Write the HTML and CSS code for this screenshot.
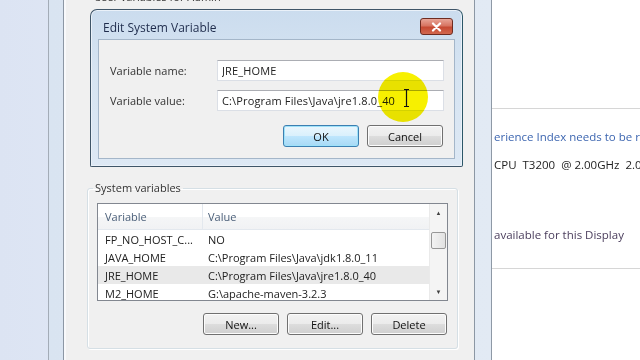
FILE: index.html
```html
<!DOCTYPE html>
<html lang="en">
<head>
<meta charset="UTF-8">
<title>Environment Variables - Edit System Variable</title>
<meta name="viewport" content="width=device-width, initial-scale=1.0">
<link rel="stylesheet" href="styles.css">
</head>
<body>

<div class="desk"></div>

<div class="env">
    <div class="env-body">
        <div class="user-title">User variables for Admin</div>

        <fieldset class="group">
            <legend>System variables</legend>
            <div class="list">
                <div class="list-main">
                    <div class="list-head">
                        <span class="col-var">Variable</span>
                        <span class="col-val">Value</span>
                    </div>
                    <div class="row"><span class="col-var">FP_NO_HOST_C...</span><span class="col-val">NO</span></div>
                    <div class="row"><span class="col-var">JAVA_HOME</span><span class="col-val">C:\Program Files\Java\jdk1.8.0_11</span></div>
                    <div class="row sel"><span class="col-var">JRE_HOME</span><span class="col-val">C:\Program Files\Java\jre1.8.0_40</span></div>
                    <div class="row"><span class="col-var">M2_HOME</span><span class="col-val">G:\apache-maven-3.2.3</span></div>
                </div>
                <div class="scroll">
                    <div class="arrow">&#9650;</div>
                    <div class="track"><div class="thumb"></div></div>
                    <div class="arrow">&#9660;</div>
                </div>
            </div>
            <div class="btn-row">
                <button class="btn">New...</button>
                <button class="btn">Edit...</button>
                <button class="btn">Delete</button>
            </div>
        </fieldset>
    </div>
</div>

<div class="props">
    <div class="props-top"></div>
    <div class="props-info">
        <p class="link">erience Index needs to be refreshed</p>
        <p>CPU&nbsp; T3200&nbsp; @ 2.00GHz&nbsp; 2.00 GHz</p>
        <p class="display">available for this Display</p>
    </div>
</div>

<!-- dialog on top of the Environment Variables window -->
<div class="dialog">
    <div class="title-bar">
        <span class="title">Edit System Variable</span>
        <div class="close">
            <svg width="13" height="10" viewBox="0 0 13 10">
                <path d="M3 1.5 L10 8.5 M10 1.5 L3 8.5" stroke="#fff" stroke-width="2.2" stroke-linecap="round"/>
            </svg>
        </div>
    </div>
    <div class="dlg-body">
        <div class="fields">
            <label for="varName">Variable name:</label>
            <input id="varName" type="text" value="JRE_HOME">
            <label for="varValue">Variable value:</label>
            <input id="varValue" type="text" value="C:\Program Files\Java\jre1.8.0_40">
        </div>
        <div class="dlg-buttons">
            <button class="btn default">OK</button>
            <button class="btn">Cancel</button>
        </div>
    </div>
</div>

<div class="spot"></div>
<svg class="ibeam" width="7" height="20" viewBox="0 0 7 20">
    <path d="M1 1.5 H6 M3.5 1.5 V18.5 M1 18.5 H6" stroke="#111" stroke-width="1.2" fill="none"/>
</svg>

</body>
</html>
```

FILE: styles.css
```css
body {
    margin: 0;
    width: 640px;
    height: 360px;
    overflow: hidden;
    display: flex;
    font-family: "Open Sans", "Noto Sans", sans-serif;
    font-size: 11px;
    color: #222;
    background: linear-gradient(90deg, #dce4f3 0%, #e9eff9 70%, #e3eaf6 100%);
}
.desk {
    width: 48px;
    flex: none;
}
.env {
    width: 444px;
    flex: none;
    display: flex;
    box-sizing: border-box;
    border-left: 1px solid #a3acb7;
    border-right: 1px solid #8e99a6;
    background: linear-gradient(90deg, #d9e4f1, #e2eaf4);
    padding: 0 16px 0 14px;
}
.env-body {
    flex: 1;
    background: #f0f0f0;
    border-left: 1px solid #8c97a4;
    border-right: 1px solid #8c97a4;
    box-shadow: inset 2px 0 0 #f8f9fb;
}
.user-title {
    margin: -11px 0 0 30px;
    line-height: 15px;
    color: #333;
}
.group {
    margin: 176px 0 0 23px;
    width: 371px;
    box-sizing: border-box;
    border: 1px solid #d5dfe5;
    border-radius: 3px;
    padding: 7px 9px 13px 9px;
    box-shadow: inset 1px 1px 0 #fff, 1px 1px 0 #fff;
}
.group legend {
    margin-left: -4px;
    padding: 0 2px;
    line-height: 16px;
    color: #333;
}
.list {
    height: 98px;
    box-sizing: border-box;
    border: 1px solid #828790;
    background: #fff;
    display: flex;
    overflow: hidden;
}
.list-main {
    flex: 1;
    overflow: hidden;
}
.list-head {
    display: flex;
    height: 26px;
    box-sizing: border-box;
    align-items: center;
    background: linear-gradient(#ffffff 0%, #ffffff 50%, #f5f6f7 51%, #f1f2f4 100%);
    border-bottom: 1px solid #e3e8ee;
    color: #4c607a;
}
.list-head .col-var {
    border-right: 1px solid #e3e8ee;
    align-self: stretch;
    display: flex;
    align-items: center;
}
.row {
    display: flex;
    height: 18px;
    align-items: center;
    white-space: nowrap;
}
.row.sel {
    background: #e9e9e9;
}
.col-var {
    width: 105px;
    flex: none;
    box-sizing: border-box;
    padding-left: 7px;
}
.col-val {
    padding-left: 5px;
}
.scroll {
    width: 17px;
    flex: none;
    display: flex;
    flex-direction: column;
    background: #f4f4f4;
    border-left: 1px solid #eaeaea;
}
.arrow {
    height: 17px;
    font-size: 6px;
    color: #404040;
    display: flex;
    align-items: center;
    justify-content: center;
}
.track {
    flex: 1;
    padding-top: 11px;
}
.thumb {
    margin: 0 1px;
    height: 15px;
    border: 1px solid #979797;
    border-radius: 2px;
    background: linear-gradient(90deg, #f3f3f3, #e2e2e2);
}
.btn-row {
    display: flex;
    justify-content: flex-end;
    gap: 8px;
    margin: 12px 1px 0 0;
}
.btn {
    width: 76px;
    height: 22px;
    font-family: inherit;
    font-size: 11px;
    color: #111;
    border: 1px solid #707070;
    border-radius: 3px;
    background: linear-gradient(#f2f2f2 0%, #ebebeb 50%, #dddddd 51%, #cfcfcf 100%);
    box-shadow: inset 0 0 0 1px #fcfcfc;
    padding: 0;
}
.btn.default {
    border-color: #3c7fb1;
    background: linear-gradient(#eaf6fd 0%, #d9f0fc 50%, #bee6fd 51%, #a7d9f5 100%);
    box-shadow: inset 0 0 0 1px #9fe2f9;
}
.props {
    flex: 1;
    background: #fff;
}
.props-top {
    height: 108px;
    border-bottom: 1px solid #d6d6d6;
}
.props-info {
    padding: 20px 0 25px 2px;
    border-bottom: 1px solid #d6d6d6;
    white-space: nowrap;
    overflow: hidden;
    font-size: 11.5px;
}
.props-info p {
    margin: 0 0 12px 0;
    line-height: 16px;
    color: #1e1e1e;
}
.props-info .link {
    color: #3d66b0;
}
.props-info .display {
    margin: 54px 0 0 0;
    color: #4a3d5c;
}
.dialog {
    position: absolute;
    left: 90px;
    top: 9px;
    width: 373px;
    height: 158px;
    box-sizing: border-box;
    border: 1px solid #3f5568;
    border-right-color: #2c5768;
    border-radius: 7px 7px 2px 2px;
    background: linear-gradient(#cbdcee 0%, #d6e4f2 40%, #dde8f4 100%);
    box-shadow: inset 0 0 0 1px #eaf1f9;
    padding: 0 7px 7px 7px;
    display: flex;
    flex-direction: column;
}
.title-bar {
    height: 29px;
    flex: none;
    display: flex;
    justify-content: space-between;
    align-items: flex-start;
}
.title {
    padding: 9px 0 0 5px;
    font-size: 12px;
    color: #1f2c4c;
}
.close {
    margin: 8px 2px 0 0;
    width: 33px;
    height: 17px;
    box-sizing: border-box;
    border: 1px solid #6e2b20;
    border-radius: 3px;
    background: linear-gradient(#e8a597 0%, #d77562 45%, #c64a33 55%, #d2684f 100%);
    display: flex;
    align-items: center;
    justify-content: center;
}
.dlg-body {
    flex: 1;
    background: #f0f0f0;
    border: 1px solid #a4b6c9;
    padding: 20px 11px 0 11px;
}
.fields {
    display: grid;
    grid-template-columns: 107px 227px;
    row-gap: 9px;
    align-items: center;
}
.fields label {
    color: #333;
}
.fields input {
    height: 21px;
    box-sizing: border-box;
    border: 1px solid #dbdfe6;
    border-top-color: #abadb3;
    background: #fff;
    font-family: inherit;
    font-size: 11px;
    letter-spacing: 0.15px;
    color: #222;
    padding: 0 0 0 4px;
    margin: 0;
    outline: none;
}
.dlg-buttons {
    display: flex;
    justify-content: flex-end;
    gap: 8px;
    margin-top: 14px;
}
.spot {
    position: absolute;
    left: 378px;
    top: 72px;
    width: 50px;
    height: 50px;
    border-radius: 50%;
    background: #f7f000;
    mix-blend-mode: multiply;
}
.ibeam {
    position: absolute;
    left: 403px;
    top: 88px;
}
```
